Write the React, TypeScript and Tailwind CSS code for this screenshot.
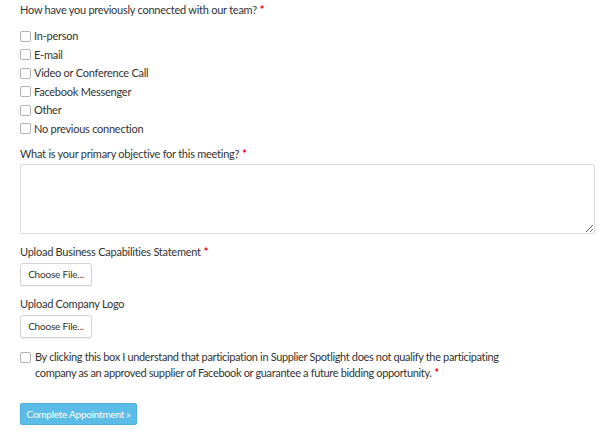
import React, { useState } from 'react';

const options = [
  'In-person',
  'E-mail',
  'Video or Conference Call',
  'Facebook Messenger',
  'Other',
  'No previous connection',
];

const Req = () => <span className="text-[#e0001b] ml-[3px] text-[11px] font-bold align-top">*</span>;

const Box: React.FC<{ checked: boolean; onChange: () => void }> = ({ checked, onChange }) => (
  <input
    type="checkbox"
    checked={checked}
    onChange={onChange}
    className="appearance-none w-[11px] h-[11px] border border-[#b3b3b3] rounded-[2px] bg-white shrink-0 checked:bg-[#5bb8e6]"
  />
);

const FileButton = () => (
  <button className="h-[23px] w-[72px] border border-[#d2d2d2] rounded-[3px] bg-white text-[10px] tracking-[-0.2px] text-[#333] shadow-[0_1px_1px_rgba(0,0,0,0.06)]">
    Choose File...
  </button>
);

export default function App() {
  const [checked, setChecked] = useState<string[]>([]);
  const [agree, setAgree] = useState(false);
  const [objective, setObjective] = useState('');

  const toggle = (o: string) =>
    setChecked(checked.includes(o) ? checked.filter(c => c !== o) : [...checked, o]);

  return (
    <div className="w-[615px] h-[444px] bg-white px-[20px] pt-[1px] text-[#333] font-['Lato',sans-serif] text-[11px] tracking-[-0.25px]">
      <div className="h-[18px] leading-[18px]">
        How have you previously connected with our team?<Req />
      </div>

      <div className="mt-[8px] flex flex-col">
        {options.map(o => (
          <label key={o} className="h-[18.5px] flex items-center gap-[3px] cursor-pointer">
            <Box checked={checked.includes(o)} onChange={() => toggle(o)} />
            <span>{o}</span>
          </label>
        ))}
      </div>

      <div className="mt-[7px] h-[18px] leading-[18px]">
        What is your primary objective for this meeting?<Req />
      </div>
      <textarea
        value={objective}
        onChange={e => setObjective(e.target.value)}
        className="mt-[1px] block w-[575px] h-[70px] border border-[#dcdcdc] rounded-[2px] outline-none p-1"
      />

      <div className="mt-[9px] h-[18px] leading-[18px]">
        Upload Business Capabilities Statement<Req />
      </div>
      <div className="mt-[2px]">
        <FileButton />
      </div>

      <div className="mt-[9px] h-[18px] leading-[18px]">Upload Company Logo</div>
      <div className="mt-[2px]">
        <FileButton />
      </div>

      <label className="mt-[11px] flex items-start gap-[4px] cursor-pointer">
        <span className="pt-[3px] flex">
          <Box checked={agree} onChange={() => setAgree(!agree)} />
        </span>
        <span className="leading-[16px] whitespace-nowrap tracking-[-0.35px]">
          By clicking this box I understand that participation in Supplier Spotlight does not qualify the participating
          <br />
          company as an approved supplier of Facebook or guarantee a future bidding opportunity.<Req />
        </span>
      </label>

      <button className="mt-[22px] h-[22px] w-[117px] bg-[#5bbce8] rounded-[2px] text-white text-[10px] border border-[#4fb0dc]">
        Complete Appointment »
      </button>
    </div>
  );
}
